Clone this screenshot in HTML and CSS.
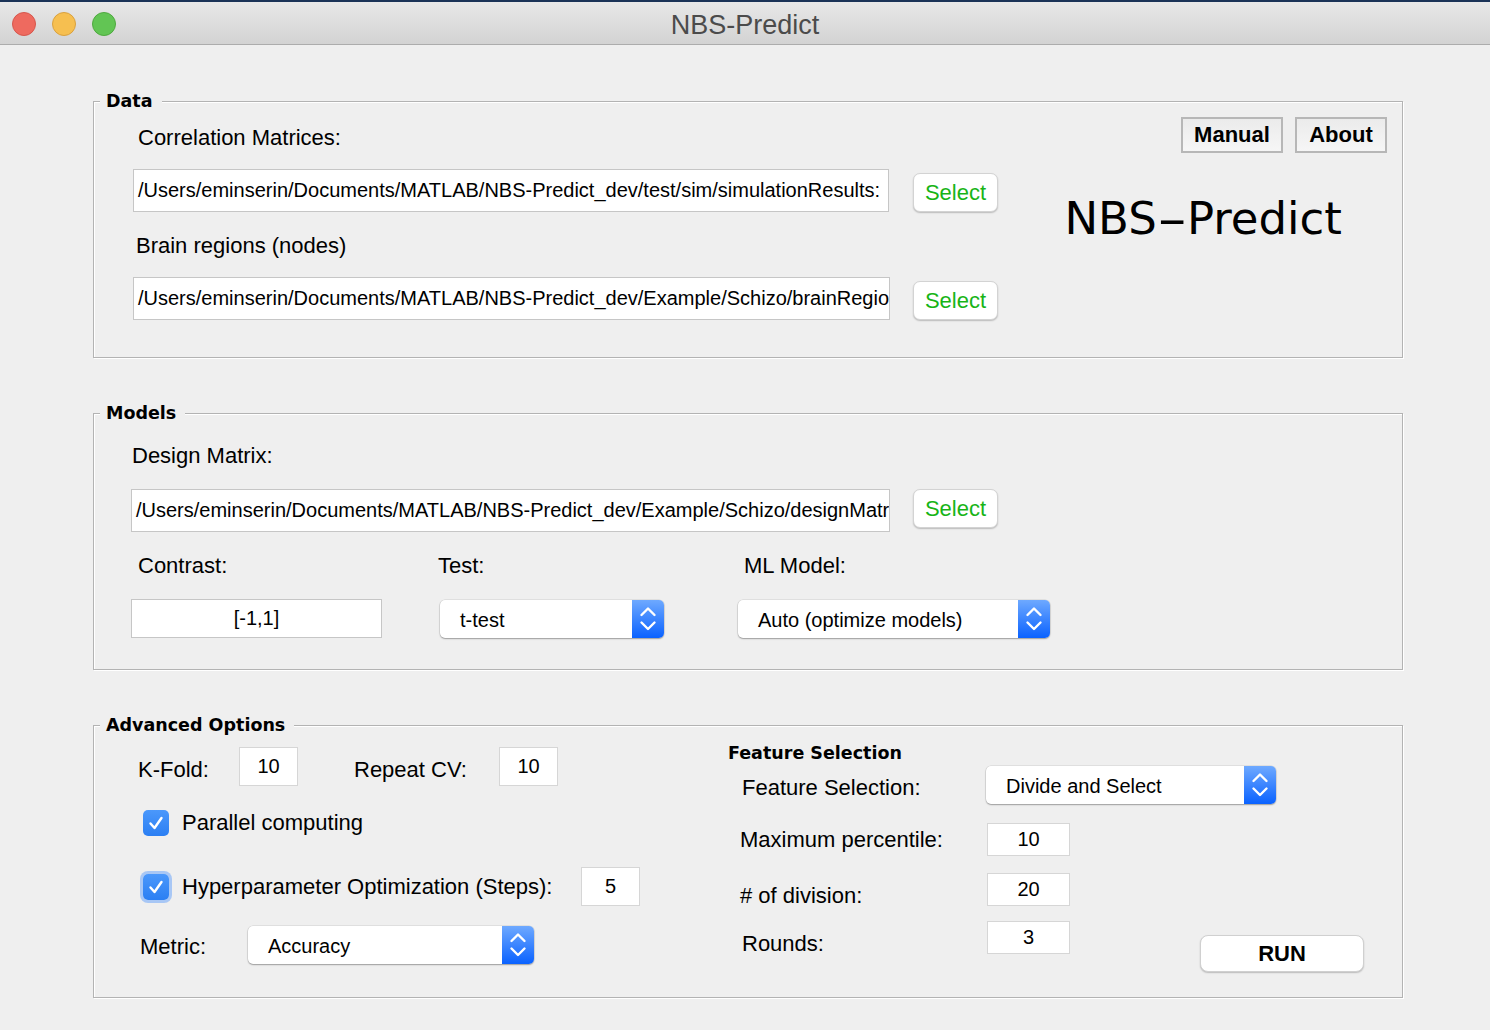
FILE: index.html
```html
<!DOCTYPE html>
<html>
<head>
<meta charset="utf-8">
<title>NBS-Predict</title>
<link rel="stylesheet" href="styles.css">
</head>
<body>
<div class="window">
  <header class="titlebar">
    <div class="lights">
      <span class="light red"></span>
      <span class="light yellow"></span>
      <span class="light green"></span>
    </div>
    <div class="title">NBS-Predict</div>
    <div></div>
  </header>

  <main class="content">
    <section class="panel">
      <div class="panel-title">Data</div>
      <div class="data-body">
        <div class="data-left">
          <div class="label l-corr">Correlation Matrices:</div>
          <div class="file-row bottom">
            <div class="field path w756">/Users/eminserin/Documents/MATLAB/NBS-Predict_dev/test/sim/simulationResults:</div>
            <button class="select-btn">Select</button>
          </div>
          <div class="label l-brain">Brain regions (nodes)</div>
          <div class="file-row bottom">
            <div class="field path w757">/Users/eminserin/Documents/MATLAB/NBS-Predict_dev/Example/Schizo/brainRegio</div>
            <button class="select-btn ml23">Select</button>
          </div>
        </div>
        <div class="data-right">
          <div class="top-buttons">
            <button class="plain-btn manual">Manual</button>
            <button class="plain-btn about">About</button>
          </div>
          <div class="logo">NBS<span class="dash">-</span>Predict</div>
        </div>
      </div>
    </section>

    <section class="panel">
      <div class="panel-title">Models</div>
      <div class="label l-design">Design Matrix:</div>
      <div class="file-row top m-row">
        <div class="field path w759">/Users/eminserin/Documents/MATLAB/NBS-Predict_dev/Example/Schizo/designMatr</div>
        <button class="select-btn ml23">Select</button>
      </div>
      <div class="model-grid">
        <div class="label ml7">Contrast:</div>
        <div class="label">Test:</div>
        <div class="label ml6">ML Model:</div>
        <div class="field contrast">[-1,1]</div>
        <div class="popup w224 ml2 mt1">
          <div class="popup-text">t-test</div>
          <div class="popup-arrows"><svg width="32" height="38" viewBox="0 0 32 38"><polyline points="9.5,15 16,8.5 22.5,15" /><polyline points="9.5,22.5 16,29 22.5,22.5" /></svg></div>
        </div>
        <div class="popup w312 mt1">
          <div class="popup-text">Auto (optimize models)</div>
          <div class="popup-arrows"><svg width="32" height="38" viewBox="0 0 32 38"><polyline points="9.5,15 16,8.5 22.5,15" /><polyline points="9.5,22.5 16,29 22.5,22.5" /></svg></div>
        </div>
      </div>
    </section>

    <section class="panel panel-adv">
      <div class="panel-title">Advanced Options</div>
      <div class="adv-body">
        <div class="adv-left">
          <div class="kfold-row">
            <div class="label w-kfold">K-Fold:</div>
            <div class="field small">10</div>
            <div class="label w-repeat">Repeat CV:</div>
            <div class="field small">10</div>
          </div>
          <div class="check-row c1">
            <span class="checkbox"><svg width="26" height="26" viewBox="0 0 26 26"><polyline points="7.5,13.5 11.5,18 18.5,8" /></svg></span>
            <span class="label check-label">Parallel computing</span>
          </div>
          <div class="check-row c2">
            <span class="checkbox focus"><svg width="26" height="26" viewBox="0 0 26 26"><polyline points="7.5,13.5 11.5,18 18.5,8" /></svg></span>
            <span class="label check-label w-hyper">Hyperparameter Optimization (Steps):</span>
            <div class="field small">5</div>
          </div>
          <div class="metric-row">
            <div class="label w-metric">Metric:</div>
            <div class="popup w286">
              <div class="popup-text">Accuracy</div>
              <div class="popup-arrows"><svg width="32" height="38" viewBox="0 0 32 38"><polyline points="9.5,15 16,8.5 22.5,15" /><polyline points="9.5,22.5 16,29 22.5,22.5" /></svg></div>
            </div>
          </div>
        </div>
        <div class="adv-right">
          <div class="fs-title">Feature Selection</div>
          <div class="fs-row r-fs">
            <div class="label">Feature Selection:</div>
            <div class="popup w290">
              <div class="popup-text">Divide and Select</div>
              <div class="popup-arrows"><svg width="32" height="38" viewBox="0 0 32 38"><polyline points="9.5,15 16,8.5 22.5,15" /><polyline points="9.5,22.5 16,29 22.5,22.5" /></svg></div>
            </div>
          </div>
          <div class="fs-row r-max">
            <div class="label">Maximum percentile:</div>
            <div class="field num">10</div>
          </div>
          <div class="fs-row r-div">
            <div class="label"># of division:</div>
            <div class="field num">20</div>
          </div>
          <div class="fs-row r-rounds">
            <div class="label">Rounds:</div>
            <div class="field num">3</div>
            <button class="run-btn">RUN</button>
          </div>
        </div>
      </div>
    </section>
  </main>
</div>
</body>
</html>
```

FILE: styles.css
```css
* {
  box-sizing: border-box;
}

body {
  margin: 0;
  background: #efefef;
  font-family: "Liberation Sans", Arial, sans-serif;
  color: #000;
}

.window {
  width: 1490px;
  height: 1030px;
  overflow: hidden;
}

/* title bar */
.titlebar {
  height: 45px;
  display: grid;
  grid-template-columns: 1fr auto 1fr;
  align-items: center;
  background: linear-gradient(#e8e8e8, #d3d3d3);
  border-top: 2px solid #1a3357;
  border-bottom: 1px solid #acacac;
}

.lights {
  display: flex;
  gap: 16px;
  padding: 2px 0 0 12px;
}

.light {
  width: 24px;
  height: 24px;
  border-radius: 50%;
}

.red {
  background: #ee6a5f;
  border: 1px solid #d6574d;
}

.yellow {
  background: #f6bf50;
  border: 1px solid #d9a13f;
}

.green {
  background: #62c554;
  border: 1px solid #4fa93f;
}

.title {
  font-size: 27px;
  color: #4b4b4b;
  padding-top: 4px;
}

/* content */
.content {
  padding: 56px 87px 0 93px;
}

.panel {
  height: 257px;
  border: 1px solid #b3b3b3;
  box-shadow: inset 1px 1px 0 #fff, 1px 1px 0 #fff;
}

.panel + .panel {
  margin-top: 55px;
}

.panel-adv {
  height: 273px;
}

.panel-title {
  width: fit-content;
  margin: -12px 0 0 6px;
  padding: 0 9px 0 6px;
  background: #efefef;
  font-family: "DejaVu Sans", sans-serif;
  font-weight: bold;
  font-size: 17.5px;
  line-height: 22px;
}

.label {
  font-size: 22px;
  line-height: 26px;
  white-space: nowrap;
}

.field {
  background: #fff;
  border: 1px solid #c6c6c6;
  font-size: 20px;
  display: flex;
  align-items: center;
  overflow: hidden;
  white-space: nowrap;
}

.path {
  height: 43px;
  padding-left: 4px;
}

.w756 { width: 756px; }
.w757 { width: 757px; }
.w759 { width: 759px; }

.select-btn {
  width: 85px;
  height: 39px;
  margin-left: 24px;
  padding: 0;
  background: #fff;
  border: 1px solid #d3d3d3;
  border-radius: 7px;
  box-shadow: 0 1px 1.5px rgba(0, 0, 0, 0.22);
  color: #17b417;
  font-family: "Liberation Sans", Arial, sans-serif;
  font-size: 22px;
}

.select-btn.ml23 {
  margin-left: 23px;
}

/* data panel */
.data-body {
  display: flex;
}

.data-left {
  width: 904px;
  flex: none;
}

.l-corr {
  margin: 13px 0 0 44px;
}

.l-brain {
  margin: 21px 0 0 42px;
}

.file-row {
  display: flex;
  margin-left: 39px;
  margin-top: 18px;
}

.file-row.bottom {
  align-items: flex-end;
}

.file-row.top {
  align-items: flex-start;
}

.data-right {
  flex: 1;
  display: flex;
  flex-direction: column;
  align-items: flex-end;
  padding: 5px 15px 0 0;
}

.top-buttons {
  display: flex;
  gap: 12px;
}

.plain-btn {
  height: 36px;
  padding: 0;
  border: 2px solid #b7b7b7;
  background: linear-gradient(#ebebeb, #f6f6f6);
  font-family: "Liberation Sans", Arial, sans-serif;
  font-weight: bold;
  font-size: 22px;
  color: #000;
}

.manual { width: 102px; }
.about { width: 92px; }

.logo {
  margin: 39px 45px 0 0;
  font-family: "DejaVu Sans", sans-serif;
  font-size: 45px;
  line-height: 54px;
  white-space: nowrap;
}

.dash {
  display: inline-block;
  transform: scaleX(1.9);
  margin: 0 7px;
}

/* models panel */
.l-design {
  margin: 19px 0 0 38px;
}

.m-row {
  margin-left: 37px;
  margin-top: 20px;
}

.model-grid {
  display: grid;
  grid-template-columns: 307px 300px auto;
  row-gap: 20px;
  margin: 21px 0 0 37px;
  align-items: start;
}

.ml7 { margin-left: 7px; }
.ml6 { margin-left: 6px; }
.ml2 { margin-left: 2px; }
.mt1 { margin-top: 1px; }

.contrast {
  width: 251px;
  height: 39px;
  justify-content: center;
}

.popup {
  height: 38px;
  display: flex;
  background: #fff;
  border-radius: 5px;
  box-shadow: 0 0 0 0.5px rgba(0, 0, 0, 0.12), 0 1px 1.5px rgba(0, 0, 0, 0.3);
}

.w224 { width: 224px; }
.w312 { width: 312px; }
.w286 { width: 286px; }
.w290 { width: 290px; }

.popup-text {
  flex: 1;
  padding: 2px 0 0 20px;
  font-size: 20px;
  line-height: 36px;
  white-space: nowrap;
}

.popup-arrows {
  width: 32px;
  height: 38px;
  background: linear-gradient(#6ea9ff, #0a62ff);
  border-radius: 0 5px 5px 0;
}

.popup-arrows svg {
  display: block;
}

.popup-arrows polyline,
.checkbox polyline {
  fill: none;
  stroke: #fff;
  stroke-width: 2.4;
  stroke-linecap: round;
  stroke-linejoin: round;
}

/* advanced panel */
.adv-body {
  display: flex;
}

.adv-left {
  width: 634px;
  flex: none;
}

.kfold-row {
  display: flex;
  align-items: flex-start;
  margin: 11px 0 0 44px;
}

.kfold-row .label {
  margin-top: 10px;
}

.w-kfold { width: 101px; }

.w-repeat {
  width: 145px;
  margin-left: 56px;
}

.field.small {
  width: 59px;
  height: 39px;
  justify-content: center;
  border-color: #d6d6d6;
}

.check-row {
  display: flex;
  align-items: center;
  margin-left: 49px;
}

.c1 { margin-top: 24px; }
.c2 { margin-top: 31px; }

.checkbox {
  width: 26px;
  height: 26px;
  border-radius: 5px;
  background: linear-gradient(#4b98fb, #2b7ff3);
  flex: none;
}

.checkbox svg {
  display: block;
}

.checkbox.focus {
  box-shadow: 0 0 0 3px rgba(110, 165, 250, 0.55);
}

.check-label {
  margin-left: 13px;
}

.w-hyper {
  width: 399px;
}

.metric-row {
  display: flex;
  align-items: center;
  margin: 20px 0 0 46px;
}

.w-metric {
  width: 108px;
  margin-top: 4px;
}

.adv-right {
  flex: 1;
}

.fs-title {
  margin-top: 6px;
  font-family: "DejaVu Sans", sans-serif;
  font-weight: bold;
  font-size: 17.5px;
  line-height: 22px;
}

.fs-row {
  display: flex;
  align-items: flex-start;
}

.r-fs { margin-top: 2px; }
.r-fs .label { margin: 9px 0 0 14px; width: 244px; }

.r-max { margin-top: 19px; }
.r-max .label { margin: 4px 0 0 12px; width: 247px; }

.r-div { margin-top: 17px; height: 33px; }
.r-div .label { margin: 10px 0 0 12px; width: 247px; }

.r-rounds { margin-top: 15px; }
.r-rounds .label { margin: 10px 0 0 14px; width: 245px; }

.field.num {
  width: 83px;
  height: 33px;
  justify-content: center;
  border-color: #d6d6d6;
}

.run-btn {
  width: 164px;
  height: 37px;
  margin: 14px 0 0 130px;
  padding: 0;
  background: #fff;
  border: 1px solid #d0d0d0;
  border-radius: 8px;
  box-shadow: 0 1px 1.5px rgba(0, 0, 0, 0.22);
  font-family: "Liberation Sans", Arial, sans-serif;
  font-weight: bold;
  font-size: 22px;
  color: #000;
}
```
